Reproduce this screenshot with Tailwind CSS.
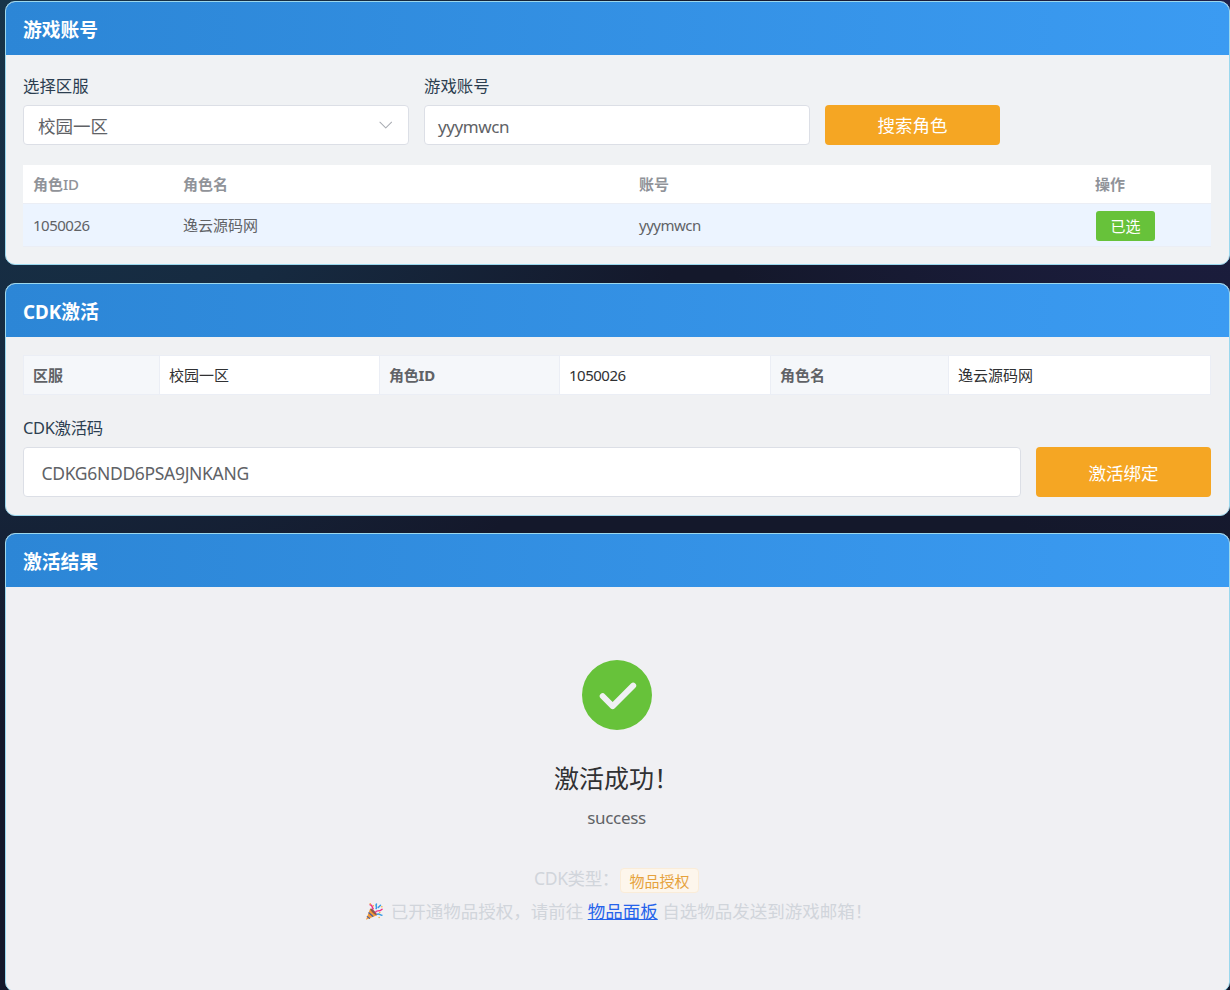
<!DOCTYPE html>
<html lang="zh-CN">
<head>
    <meta charset="UTF-8">
    <meta name="viewport" content="width=device-width, initial-scale=1.0">
    <title>CDK激活</title>
    <script src="https://cdn.jsdelivr.net/npm/@tailwindcss/browser@4"></script>
</head>
<body class="h-screen overflow-hidden bg-[#14182b] bg-[radial-gradient(circle_at_0%_0%,#173449_0%,#162a40_24%,transparent_46%),radial-gradient(circle_at_100%_0%,#20204a_0%,transparent_36%)] pl-[5px] pt-px font-['Noto_Sans','Noto_Sans_CJK_SC',sans-serif] text-[15px] text-[#606266]">
    <!-- Game account -->
    <section class="mb-[18px] h-[264px] overflow-hidden rounded-[10px] border border-[#9bd8ee] bg-[#f0f2f4]">
        <h2 class="flex h-[53px] items-center bg-linear-to-r from-[#2c86d6] to-[#3b9bf2] px-[17px] pt-[3px] text-[18.75px] font-bold text-white">游戏账号</h2>
        <div class="pl-[17px] pt-[18px]">
            <div class="flex items-end gap-[15px]">
                <div class="w-[386px]">
                    <label class="block h-8 text-[16.4px] leading-[25px] text-[#2c3e50]">选择区服</label>
                    <div class="flex h-10 items-center justify-between rounded border border-[#dcdfe6] bg-white pl-[14px] pr-[14px] text-[17.5px]">
                        <span class="pt-0.5">校园一区</span>
                        <svg class="size-[17.5px] text-[#a8abb2]" viewBox="0 0 1024 1024" fill="currentColor"><path d="M831.872 340.864 512 652.672 192.128 340.864a30.592 30.592 0 0 0-42.752 0 29.12 29.12 0 0 0 0 41.6L489.664 714.24a32 32 0 0 0 44.672 0l340.288-331.712a29.12 29.12 0 0 0 0-41.728 30.592 30.592 0 0 0-42.752 0z"/></svg>
                    </div>
                </div>
                <div class="w-[386px]">
                    <label class="block h-8 text-[16.4px] leading-[25px] text-[#2c3e50]">游戏账号</label>
                    <div class="flex h-10 items-center rounded border border-[#dcdfe6] bg-white px-[13px] pt-[3px] text-[17px] tracking-[-0.4px]">yyymwcn</div>
                </div>
                <button class="h-10 w-[175px] rounded bg-[#f5a623] text-[17.5px] text-white">搜索角色</button>
            </div>
            <div class="mt-5 w-[1188px]">
                <div class="grid h-[39px] grid-cols-[150px_456px_456px_1fr] items-center border-b border-[#ebeef5] bg-white pl-[10px] font-semibold text-[#909399]">
                    <span>角色<span class="font-medium tracking-[-0.3px]">ID</span></span><span>角色名</span><span>账号</span><span>操作</span>
                </div>
                <div class="grid h-[43px] grid-cols-[150px_456px_456px_1fr] items-center border-b border-[#ebeef5] bg-[#ecf4ff] pl-[10px]">
                    <span class="tracking-[-0.5px]">1050026</span><span>逸云源码网</span><span class="tracking-[-0.5px]">yyymwcn</span>
                    <span><button class="ml-px mt-px block h-[30px] w-[59px] rounded-[3px] bg-[#67c23a] pt-px text-white">已选</button></span>
                </div>
            </div>
        </div>
    </section>

    <!-- CDK activation -->
    <section class="mb-[17px] h-[233px] overflow-hidden rounded-[10px] border border-[#9bd8ee] bg-[#f0f1f3]">
        <h2 class="flex h-[53px] items-center bg-linear-to-r from-[#2c86d6] to-[#3b9bf2] px-[17px] pt-[3px] text-[18.75px] font-bold text-white">CDK激活</h2>
        <div class="pl-[17px] pt-[18px]">
            <dl class="grid h-10 w-[1188px] grid-cols-[136px_220px_180px_211px_178px_1fr] divide-x divide-[#ebeef5] border border-[#ebeef5] leading-[38px] *:pl-[9px]">
                <dt class="bg-[#f5f7fa] font-bold">区服</dt>
                <dd class="bg-white text-[#303133]">校园一区</dd>
                <dt class="bg-[#f5f7fa] font-bold tracking-[-0.2px]">角色ID</dt>
                <dd class="bg-white tracking-[-0.5px] text-[#303133]">1050026</dd>
                <dt class="bg-[#f5f7fa] font-bold">角色名</dt>
                <dd class="bg-white text-[#303133]">逸云源码网</dd>
            </dl>
            <div class="mt-5 flex items-end gap-[15px]">
                <div class="w-[998px]">
                    <label class="block h-8 text-[16.4px] leading-[25px] tracking-[-0.3px] text-[#2c3e50]">CDK激活码</label>
                    <div class="flex h-[50px] items-center rounded border border-[#dcdfe6] bg-white px-[17.5px] pt-0.5 text-[17.5px] tracking-[-0.32px]">CDKG6NDD6PSA9JNKANG</div>
                </div>
                <button class="h-[50px] w-[175px] rounded bg-[#f5a623] pt-0.5 text-[17.5px] text-white">激活绑定</button>
            </div>
        </div>
    </section>

    <!-- Activation result -->
    <section class="h-[459px] overflow-hidden rounded-[10px] border border-[#9bd8ee] bg-[#f0f0f3]">
        <h2 class="flex h-[53px] items-center bg-linear-to-r from-[#2c86d6] to-[#3b9bf2] px-[17px] pt-[3px] text-[18.75px] font-bold text-white">激活结果</h2>
        <div class="flex flex-col items-center pr-0.5 pt-[68px]">
            <svg class="size-20 text-[#67c23a]" viewBox="0 0 1024 1024" fill="currentColor"><path d="M512 64a448 448 0 1 1 0 896 448 448 0 0 1 0-896zm-55.808 536.384-99.52-99.584a38.4 38.4 0 1 0-54.336 54.336l126.72 126.72a38.272 38.272 0 0 0 54.336 0l262.4-262.464a38.4 38.4 0 1 0-54.272-54.336L456.192 600.384z"/></svg>
            <p class="mt-[27px] text-[25px] leading-8 text-[#303133]">激活成功！</p>
            <p class="mt-3 text-[17px] leading-6 tracking-[-0.3px]">success</p>
            <div class="mt-8 flex h-[33px] items-center text-[17.5px] text-[#d1d5db]">
                <span class="tracking-[-0.4px]">CDK类型：</span>
                <span class="ml-px mt-[3px] h-[25px] rounded border border-[#faecd8] bg-[#fdf6ec] px-[8.5px] text-[15px] leading-[24px] text-[#e6a23c]">物品授权</span>
            </div>
            <p class="flex h-[33px] items-center pl-1 text-[17.5px] text-[#d1d5db]">
                <svg class="mr-2 size-[18px]" viewBox="0 0 18 18" fill="none" stroke-linecap="round">
                    <path d="M5.2 5.5 1 16.8 12 12.2Z" fill="#f59b35"/>
                    <path d="m3.8 9.8 4 3.5M2.3 13.6l2.3 1.8" stroke="#4b5fa5" stroke-width="1.2"/>
                    <ellipse cx="8.6" cy="8.9" rx="1.3" ry="4.4" transform="rotate(-45 8.6 8.9)" fill="#8a5a52"/>
                    <path d="M5.1 1.8c2.8.3 1.7 2.8 3.1 4" stroke="#ec2f85" stroke-width="1.5"/>
                    <path d="M11.4 1.1c-1 1.5.8 2.7-.2 4.4" stroke="#3a9ce5" stroke-width="1.6"/>
                    <path d="M10.4 9.4c1.3-3 3.4.2 6.7-3.2" stroke="#ec2f85" stroke-width="1.3"/>
                    <path d="M12.5 11.2c2-.9 2.6.8 4.4 1" stroke="#3a9ce5" stroke-width="1.5"/>
                    <path d="m13.3 4.5 2.2-2.2" stroke="#3a9ce5" stroke-width="1.5"/>
                    <path d="M5.2.8h.1M8.3 2.8h.1M16.8 3.7h.1M14.7 9.5h.1M14.1 14.4h.1" stroke="#f6b73c" stroke-width="1.5"/>
                </svg>
                <span>已开通物品授权，请前往 <a href="#" class="text-[#2563eb] underline">物品面板</a> 自选物品发送到游戏邮箱！</span>
            </p>
        </div>
    </section>
</body>
</html>
